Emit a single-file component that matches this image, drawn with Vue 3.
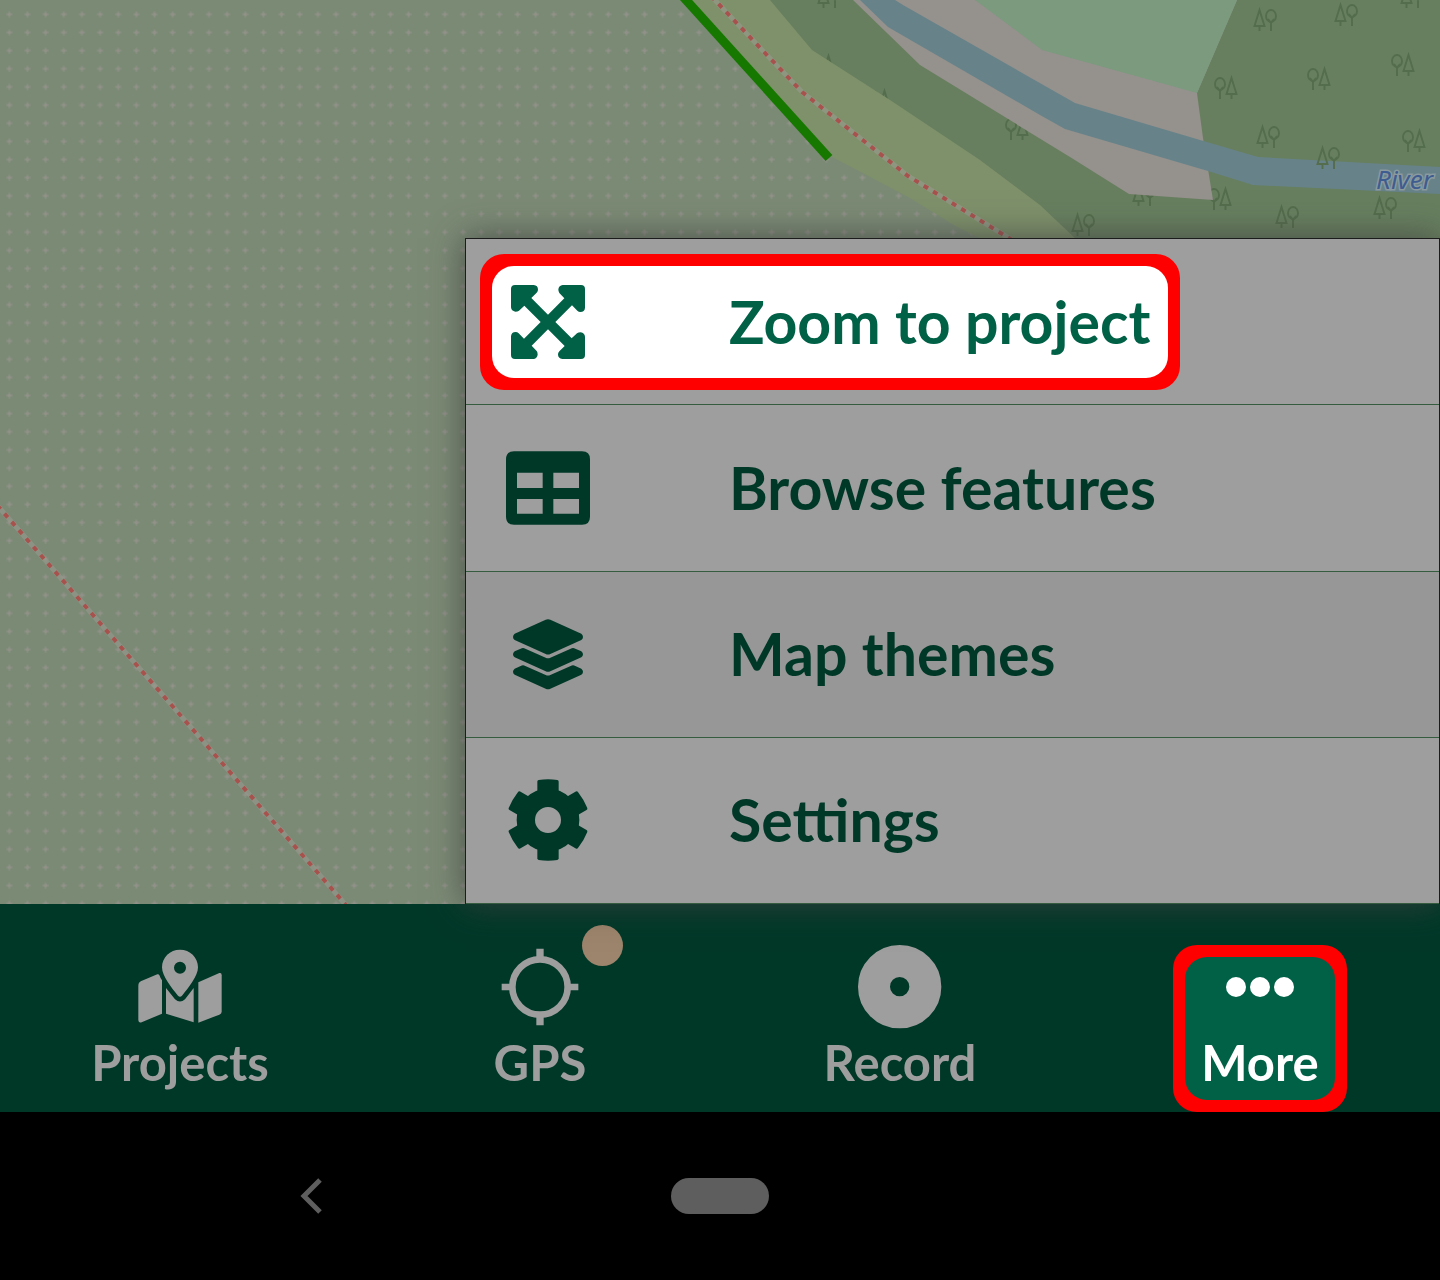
<script setup>
const conifersFirst = [
  [829, -3], [1412, -3], [1265, 20], [1346, 15], [1268, 137],
  [1287, 217], [1385, 208], [1083, 225], [1144, 195],
]
const conifersLast = [
  [823, 66], [879, 101], [1017, 129], [1226, 88], [1319, 79],
  [1403, 65], [1414, 141], [1220, 199],
]
const toothAngles = [0, 60, 120, 180, 240, 300]
const arrowAngles = [0, 90, 180, 270]
</script>

<template>
  <div class="app">
    <main class="map-area">
      <svg class="map" viewBox="0 0 1440 904" preserveAspectRatio="xMidYMin slice" role="img" aria-label="Project map">
        <defs>
          <pattern id="field-dots" x="0.25" y="5.25" width="18.15" height="18.15" patternUnits="userSpaceOnUse">
            <path d="M9.1 6.1V12.1M6.1 9.1H12.1" stroke="#94938b" stroke-width="1.8" opacity="0.6" />
            <circle cx="9.1" cy="9.1" r="1.5" fill="#96938c" opacity="0.6" />
          </pattern>
          <g id="trees-a" fill="none" stroke="#546d4c" stroke-width="1.9">
            <path d="M-5.5 -10L-10.5 6H-0.5ZM-5.5 6V11M6 1V11M3 -1L6 3L9 -1" />
            <ellipse cx="6" cy="-4" rx="5" ry="6" />
          </g>
          <g id="trees-b" fill="none" stroke="#546d4c" stroke-width="1.9">
            <path d="M5.5 -10L10.5 6H0.5ZM5.5 6V11M-6 1V11M-9 -1L-6 3L-3 -1" />
            <ellipse cx="-6" cy="-4" rx="5" ry="6" />
          </g>
        </defs>
        <rect width="1440" height="904" fill="#7b8a75" />
        <rect width="1440" height="904" fill="url(#field-dots)" />
        <path d="M760 0H1440V260H1000Z" fill="#677f5f" />
        <use v-for="([x, y], i) in conifersFirst" :key="`a${i}`" href="#trees-a" :x="x" :y="y" />
        <use v-for="([x, y], i) in conifersLast" :key="`b${i}`" href="#trees-b" :x="x" :y="y" />
        <path d="M690 0H770L812 50L890 100L980 160L1040 205L1096 258H1020L957 227L910 198L857 170L828 155Z" fill="#7e916b" />
        <path d="M853 0L920 65L1070 157L1129 194L1213 200L1203 138L1197 93L1237 0Z" fill="#95918d" />
        <path d="M975 0L1042 50L1197 93L1237 0Z" fill="#7b9a7e" />
        <path d="M860 0L888 27L1040 115L1065 129L1208 171L1253 185L1440 194V167L1258 157L1200 140L1075 103L903 5L895 0Z" fill="#678389" />
        <use href="#trees-a" x="1328" y="158" />
        <g fill="none">
          <path d="M711 -4L802 92L908 176L1012 240M-10 497L352 912" stroke="#999a8e" stroke-width="5" opacity="0.6" />
          <path d="M711 -4L802 92L908 176L1012 240M-10 497L352 912" stroke="#a8524e" stroke-width="4" stroke-dasharray="5 6" />
          <path d="M677 -10L829 158" stroke="#177800" stroke-width="9" />
        </g>
        <text class="river" x="1376" y="189">River</text>
      </svg>

      <ul class="menu">
        <li class="row">
          <div class="highlight">
            <button class="entry current" type="button">
              <svg class="icon" viewBox="123 133 252 252" aria-hidden="true">
                <path
                  v-for="a in arrowAngles" :key="a" :transform="`rotate(${a} 249 259)`"
                  d="M150 148H206Q219 149 219 162Q219 167 215 171L199 187L249 237V260L248 259H227L178 210L162 225Q158 228 151 228Q139 226 138 215V160Q138 148 150 148Z"
                />
                <path d="M227 259L249 237L271 259L249 281Z" />
              </svg>
              <span>Zoom to project</span>
            </button>
          </div>
        </li>
        <li class="row">
          <button class="entry" type="button">
            <svg class="icon" viewBox="123 632 252 252" aria-hidden="true">
              <path fill-rule="evenodd" d="M147 648H351Q375 648 375 672V844Q375 868 351 868H147Q123 868 123 844V672Q123 648 147 648ZM156 712V758H233V712ZM265 712V758H342V712ZM156 791V835H233V791ZM265 791V835H342V791Z" />
            </svg>
            <span>Browse features</span>
          </button>
        </li>
        <li class="row pressed">
          <button class="entry" type="button">
            <svg class="icon" viewBox="123 156 252 252" aria-hidden="true">
              <path d="M242 179Q249 176 256 179L349 221Q354 225 354 231Q354 237 349 240L256 282Q249 285 242 282L149 240Q144 237 144 231Q144 225 149 221Z" />
              <path id="layer" d="M167 266Q174 262 181 266L242 293Q249 296 256 293L317 266Q324 262 331 266L349 274Q354 278 354 283Q354 289 349 292L256 334Q249 337 242 334L149 292Q144 289 144 283Q144 278 149 274Z" />
              <use href="#layer" y="52" />
            </svg>
            <span>Map themes</span>
          </button>
        </li>
        <li class="row">
          <button class="entry" type="button">
            <svg class="icon" viewBox="123 656 252 252" aria-hidden="true">
              <circle cx="249" cy="782" r="66.5" fill="none" stroke="currentColor" stroke-width="55" />
              <path
                v-for="a in toothAngles" :key="a" :transform="`rotate(${a} 249 782)`"
                d="M217 667Q217 663 221 662Q249 658 277 662Q281 663 281 667V715H217Z"
              />
            </svg>
            <span>Settings</span>
          </button>
        </li>
      </ul>
    </main>

    <nav class="tabs">
      <button class="tab" type="button">
        <svg class="icon" viewBox="114 75 252 252" aria-hidden="true">
          <path fill-rule="evenodd" d="M240 89C270 89 294 112 294 142C294 168 265 204 246 227Q240 233 234 227C215 204 186 168 186 142C186 112 210 89 240 89ZM240 125A18 18 0 1 0 240 161A18 18 0 1 0 240 125Z" />
          <path d="M115 197Q115 187 124 183L172 163Q177 161 179 167Q181 174 186 181V281L125 307Q116 310 115 301Z" />
          <path d="M198 204L225 238Q240 251 255 238L281 204V307L198 281Z" />
          <path d="M295 187L358 159Q365 157 365 166V275Q365 281 358 284L295 308Z" />
        </svg>
        <span>Projects</span>
      </button>
      <button class="tab" type="button">
        <span class="icon-box">
          <svg class="icon" viewBox="84 133 252 252" aria-hidden="true">
            <circle cx="210" cy="259" r="83" fill="none" stroke="currentColor" stroke-width="20" />
            <path d="M199 144H221V174H199ZM199 344H221V374H199ZM95 249H125V269H95ZM295 249H325V269H295Z" />
          </svg>
          <i class="status"></i>
        </span>
        <span>GPS</span>
      </button>
      <button class="tab" type="button">
        <svg class="icon" viewBox="0 0 252 252" aria-hidden="true">
          <circle cx="125" cy="125" r="77" fill="none" stroke="currentColor" stroke-width="96" />
        </svg>
        <span>Record</span>
      </button>
      <div class="highlight">
        <button class="tab active" type="button">
          <svg class="more-icon" viewBox="0 0 84 60" aria-hidden="true">
            <circle cx="18" cy="30" r="10" />
            <circle cx="42" cy="30" r="10" />
            <circle cx="66" cy="30" r="10" />
          </svg>
          <span>More</span>
        </button>
      </div>
    </nav>

    <footer class="system">
      <button class="back" type="button" aria-label="Back">
        <svg viewBox="0 0 24 36" aria-hidden="true">
          <path d="M20 2L4 18L20 34" fill="none" stroke="currentColor" stroke-width="5" />
        </svg>
      </button>
      <button class="home" type="button" aria-label="Home"></button>
    </footer>
  </div>
</template>

<style>
body {
  margin: 0;
  background: #000;
}
</style>

<style scoped>
.app {
  display: flex;
  flex-direction: column;
  min-height: 100vh;
  overflow: hidden;
  background: #000;
  font-family: Lato, sans-serif;
  font-weight: 700;
}

button {
  margin: 0;
  padding: 0;
  border: 0;
  background: none;
  color: inherit;
  font: inherit;
  cursor: pointer;
}

.icon {
  display: block;
  flex: none;
  width: 84px;
  height: 84px;
  fill: currentColor;
}

.map-area {
  position: relative;
  z-index: 1;
  display: grid;
  grid-template-columns: 31fr 65fr;
  min-height: 904px;
}

.map {
  position: absolute;
  inset: 0;
  width: 100%;
  height: 100%;
}

.river {
  fill: #3f5c90;
  stroke: #8a9a9f;
  stroke-width: 3px;
  paint-order: stroke;
  font: italic 400 26px "Noto Sans", sans-serif;
}

.menu {
  position: relative;
  grid-column: 2;
  display: grid;
  grid-auto-rows: 1fr;
  margin: 238px 0 0;
  padding: 0;
  list-style: none;
  border: 1px solid #1c1c1c;
  border-bottom: 0;
  box-shadow: 0 0 32px rgba(64, 64, 64, 0.8);
  background: #9e9e9e;
  color: #003828;
  font-size: 59px;
  line-height: 72px;
}

.row {
  display: flex;
  align-items: center;
  border-bottom: 1px solid #365c3f;
}

.pressed {
  background: #979797;
}

.entry {
  display: flex;
  align-items: center;
  gap: 139px;
  flex: 1;
  align-self: stretch;
  padding-left: 40px;
  text-align: left;
  white-space: nowrap;
}

.highlight {
  padding: 12px;
  border-radius: 24px;
  background: #f00;
}

.row .highlight {
  margin-left: 14px;
}

.current {
  padding: 14px 18px 14px 14px;
  border-radius: 22px;
  background: #fff;
  color: #006146;
}

.tabs {
  display: grid;
  grid-template-columns: repeat(4, 1fr);
  justify-items: center;
  padding-top: 41px;
  background: #003828;
  color: #9e9e9e;
  font-size: 49px;
  line-height: 66px;
}

.tab {
  display: flex;
  flex-direction: column;
  align-items: center;
  padding: 0 16px 17px;
}

.icon-box {
  position: relative;
}

.status {
  position: absolute;
  top: -20px;
  left: 100%;
  width: 41px;
  height: 41px;
  border-radius: 50%;
  background: #9d846c;
}

.active {
  padding-bottom: 5px;
  border-radius: 22px;
  background: #006146;
  color: #fff;
}

.more-icon {
  display: block;
  width: 84px;
  height: 60px;
  margin-bottom: 12px;
  fill: currentColor;
}

.system {
  display: grid;
  grid-template-columns: 1fr auto 1fr;
  align-items: center;
  flex: 1;
  min-height: 168px;
  color: #5e5e5e;
}

.back {
  justify-self: center;
  margin-right: 48px;
}

.back svg {
  display: block;
  width: 24px;
  height: 36px;
}

.home {
  width: 98px;
  height: 36px;
  border-radius: 18px;
  background: currentColor;
}
</style>
